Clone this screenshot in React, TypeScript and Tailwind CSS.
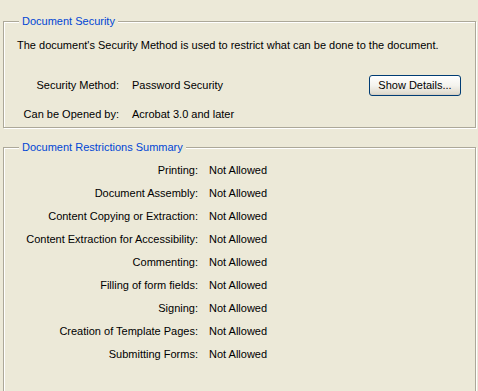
import React from "react";

const restrictions = [
  "Printing:",
  "Document Assembly:",
  "Content Copying or Extraction:",
  "Content Extraction for Accessibility:",
  "Commenting:",
  "Filling of form fields:",
  "Signing:",
  "Creation of Template Pages:",
  "Submitting Forms:",
];

const fieldsetCls =
  "border border-[#aca899] shadow-[inset_1px_1px_0_#ffffff,1px_1px_0_#ffffff] m-0 p-0 min-w-0";
const legendCls =
  "ml-[15px] px-[3px] leading-[13px] text-[#0046d5] bg-[#ece9d8]";

export default function App() {
  return (
    <div className="w-[478px] h-[391px] overflow-hidden bg-[#ece9d8] pl-[3px] pr-[2px] pt-[15px] text-[11px] leading-[13px] text-black font-['Liberation_Sans',Arial,sans-serif]">
      <fieldset className={fieldsetCls}>
        <legend className={legendCls}>Document Security</legend>
        <div className="pt-[11px] pb-[6px]">
          <div className="pl-[13px]">
            The document's Security Method is used to restrict what can be done to the document.
          </div>
          <div className="mt-[23px] flex items-center h-[21px] pr-[14px]">
            <div className="w-[115px] text-right">Security Method:</div>
            <div className="ml-[13px]">Password Security</div>
            <button className="ml-auto w-[92px] h-[21px] rounded-[3px] border border-[#003c74] bg-gradient-to-b from-white via-[#f4f3ee] to-[#dcd7c9] shadow-[inset_0_-1px_0_#d6d0c5] text-[11px] leading-[13px] text-black">
              Show Details...
            </button>
          </div>
          <div className="mt-[12px] flex">
            <div className="w-[115px] text-right">Can be Opened by:</div>
            <div className="ml-[13px]">Acrobat 3.0 and later</div>
          </div>
        </div>
      </fieldset>
      <fieldset className={fieldsetCls + " mt-[13px] h-[300px]"}>
        <legend className={legendCls}>Document Restrictions Summary</legend>
        <div className="pt-[5px] flex flex-col">
          {restrictions.map((r) => (
            <div key={r} className="flex items-center h-[23px]">
              <div className="w-[194px] text-right">{r}</div>
              <div className="ml-[11px]">Not Allowed</div>
            </div>
          ))}
        </div>
      </fieldset>
    </div>
  );
}
